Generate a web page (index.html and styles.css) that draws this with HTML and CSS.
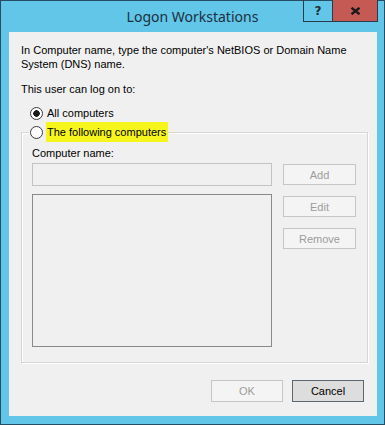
FILE: index.html
```html
<!DOCTYPE html>
<html>
<head>
<meta charset="utf-8">
<title>Logon Workstations</title>
<link rel="stylesheet" href="styles.css">
</head>
<body>
<div class="window">
  <div class="titlebar">
    <div class="title">Logon Workstations</div>
    <div class="caption-buttons">
      <div class="cap help">?</div>
      <div class="cap close">
        <svg width="11" height="8" viewBox="0 0 11 8"><path d="M1.5 0.8 L9.5 7.2 M9.5 0.8 L1.5 7.2" stroke="#1a1a1a" stroke-width="2.4" fill="none"/></svg>
      </div>
    </div>
  </div>
  <div class="client">
    <p class="desc">In Computer name, type the computer's NetBIOS or Domain Name<br>System (DNS) name.</p>
    <p class="lead">This user can log on to:</p>
    <div class="radio-row"><span class="radio checked"></span><span>All computers</span></div>
    <fieldset class="group">
      <legend class="legend"><span class="radio"></span><span class="hl">The following computers</span></legend>
      <div class="grid">
        <div class="cn-label">Computer name:</div>
        <div class="input"></div>
        <div class="btn add disabled">Add</div>
        <div class="list"></div>
        <div class="side">
          <div class="btn disabled">Edit</div>
          <div class="btn disabled">Remove</div>
        </div>
      </div>
    </fieldset>
    <div class="footer">
      <div class="btn dlg disabled">OK</div>
      <div class="btn dlg cancel">Cancel</div>
    </div>
  </div>
</div>
</body>
</html>
```

FILE: styles.css
```css
html, body {
  margin: 0;
  padding: 0;
  background: #ffffff;
}

.window {
  position: relative;
  box-sizing: border-box;
  width: 385px;
  height: 425px;
  border: 1px solid #244e63;
  background: #61c6e7;
  padding: 0 7px 8px 8px;
  display: flex;
  flex-direction: column;
  font-family: "Liberation Sans", Arial, sans-serif;
  font-size: 11px;
  color: #000;
}

.titlebar {
  height: 31px;
  flex: none;
}

.title {
  text-align: center;
  line-height: 31px;
  font-size: 14px;
  color: #1c2f42;
  font-family: "Noto Sans", "Liberation Sans", sans-serif;
  margin-left: -8px;
  margin-right: -7px;
}

.caption-buttons {
  position: absolute;
  top: -1px;
  right: 6px;
  display: flex;
  height: 22px;
  border: 1px solid #2a3c4c;
  border-top: none;
  box-sizing: border-box;
}

.cap {
  display: flex;
  align-items: center;
  justify-content: center;
}

.help {
  width: 28px;
  border-right: 1px solid #2a3c4c;
  font-weight: bold;
  font-size: 12px;
  color: #1f2d3a;
  font-family: "DejaVu Sans", sans-serif;
}

.close {
  width: 44px;
  background: #c55a55;
}

.client {
  flex: 1;
  background: #f0f0f0;
  padding: 11px 9px 0 12px;
  display: flex;
  flex-direction: column;
}

.desc, .lead {
  margin: 0;
  line-height: 14px;
}

.lead {
  margin-top: 11px;
}

.radio-row {
  display: flex;
  align-items: center;
  gap: 4px;
  margin-top: 10px;
  padding-left: 9px;
  line-height: 14px;
}

.radio {
  box-sizing: border-box;
  width: 13px;
  height: 13px;
  border-radius: 50%;
  border: 1px solid #3b3b3b;
  background: #ffffff;
  flex: none;
}

.radio.checked {
  background: radial-gradient(circle, #1a1a1a 0 3px, #ffffff 3.5px);
}

.group {
  margin: 2px 0 0 0;
  padding: 4px 10px 15px 10px;
  border: 1px solid #d6d6d6;
  box-shadow: inset 1px 1px 0 #ffffff, 1px 1px 0 #ffffff;
  min-width: 0;
}

.legend {
  display: flex;
  align-items: center;
  gap: 4px;
  padding: 0 0 0 1px;
  margin-left: -3px;
  line-height: 20px;
  background: #f0f0f0;
}

.hl {
  background: #f6f61c;
  padding: 0 2px 0 1px;
  margin-left: -1px;
}

.grid {
  display: grid;
  grid-template-columns: 240px 73px;
  column-gap: 11px;
  align-items: start;
}

.cn-label {
  grid-column: 1 / 3;
  line-height: 14px;
}

.input {
  box-sizing: border-box;
  height: 23px;
  margin-top: 3px;
  border: 1px solid #c3c3c3;
  background: #f0f0f0;
}

.btn {
  box-sizing: border-box;
  height: 21px;
  display: flex;
  align-items: center;
  justify-content: center;
  border: 1px solid #acacac;
  background: #e5e5e5;
}

.btn.disabled {
  border-color: #c6c6c6;
  background: #f4f4f4;
  color: #9c9c9c;
}

.add {
  margin-top: 4px;
}

.list {
  box-sizing: border-box;
  height: 153px;
  margin-top: 8px;
  border: 1px solid #8a8a8a;
  background: #f0f0f0;
}

.side {
  display: flex;
  flex-direction: column;
  gap: 11px;
  margin-top: 10px;
}

.footer {
  display: flex;
  justify-content: flex-end;
  gap: 9px;
  margin-top: 17px;
  padding-right: 4px;
}

.dlg {
  width: 72px;
  height: 22px;
}

.cancel {
  background: #dddddd;
  border-color: #5d6771;
}
```
